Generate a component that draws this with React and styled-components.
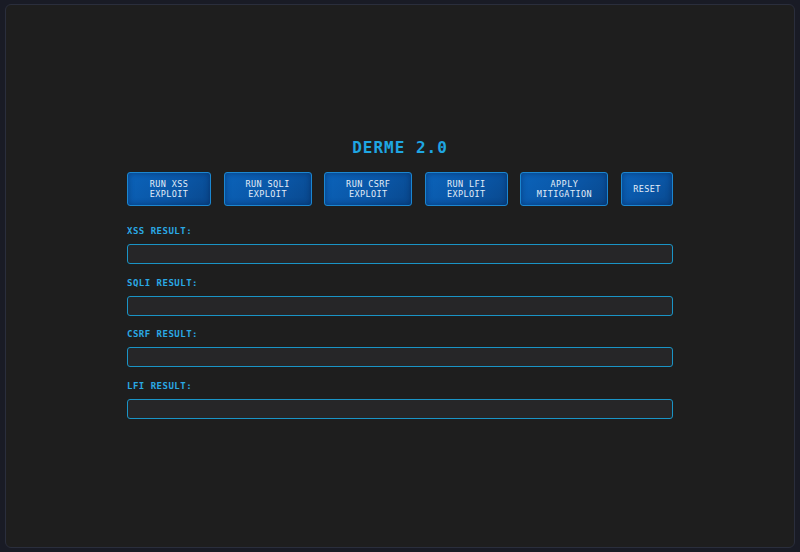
import React from 'react'
import styled, { createGlobalStyle } from 'styled-components'

const GlobalStyle = createGlobalStyle`
  html, body {
    margin: 0;
    padding: 0;
    background: #191b25;
  }
`

const Frame = styled.div`
  box-sizing: border-box;
  margin: 4px 5px;
  height: 544px;
  border: 1px solid #2a2e3c;
  border-radius: 6px;
  background: #1e1e1e;
  display: flex;
  justify-content: center;
`

const Panel = styled.div`
  width: 546px;
  padding-top: 133px;
  font-family: "DejaVu Sans Mono", "Liberation Mono", monospace;
`

const Title = styled.h1`
  margin: 0;
  text-align: center;
  font-size: 16px;
  line-height: 20px;
  font-weight: bold;
  letter-spacing: 1px;
  color: #1fa6e2;
`

const Toolbar = styled.div`
  display: flex;
  justify-content: space-between;
  margin-top: 14px;
`

const Button = styled.button`
  box-sizing: border-box;
  width: ${p => p.$w}px;
  height: 34px;
  padding: 0;
  border: 1px solid #1b86d0;
  border-radius: 3px;
  background: linear-gradient(135deg, #0b63ba 0%, #0a56a6 55%, #09488d 100%);
  box-shadow: inset 0 0 6px rgba(0, 20, 60, 0.45);
  color: #e2edf8;
  font-family: "DejaVu Sans Mono", "Liberation Mono", monospace;
  font-size: 8.5px;
  line-height: 10px;
  letter-spacing: 0.4px;
  text-transform: uppercase;
`

const Results = styled.div`
  margin-top: 20px;
  display: flex;
  flex-direction: column;
  gap: 13.6px;
`

const Field = styled.div`
  display: flex;
  flex-direction: column;
  gap: 7px;
`

const Label = styled.label`
  font-size: 9px;
  line-height: 11px;
  font-weight: bold;
  letter-spacing: 0.5px;
  text-transform: uppercase;
  color: #2aa9e4;
`

const Output = styled.div`
  box-sizing: border-box;
  height: 20px;
  border: 1px solid #1a94c6;
  border-radius: 3px;
  background: #262628;
`

const buttons = [
  { text: ['Run XSS', 'Exploit'], w: 84 },
  { text: ['Run SQLi', 'Exploit'], w: 88 },
  { text: ['Run CSRF', 'Exploit'], w: 88 },
  { text: ['Run LFI', 'Exploit'], w: 83 },
  { text: ['Apply', 'Mitigation'], w: 88 },
  { text: ['Reset'], w: 52 },
]

const results = ['XSS', 'SQLi', 'CSRF', 'LFI']

export default function App() {
  return (
    <>
      <GlobalStyle />
      <Frame>
        <Panel>
          <Title>DERME 2.0</Title>
          <Toolbar>
            {buttons.map((b) => (
              <Button key={b.text.join()} $w={b.w}>
                {b.text.map((t, i) => (
                  <React.Fragment key={t}>
                    {i > 0 && <br />}
                    {t}
                  </React.Fragment>
                ))}
              </Button>
            ))}
          </Toolbar>
          <Results>
            {results.map((r) => (
              <Field key={r}>
                <Label>{r} Result:</Label>
                <Output />
              </Field>
            ))}
          </Results>
        </Panel>
      </Frame>
    </>
  )
}
